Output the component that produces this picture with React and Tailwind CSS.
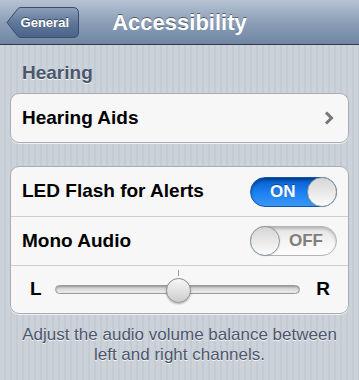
import React from "react";

function Toggle({ on }) {
  if (on) {
    return (
      <div className="relative flex h-[30px] w-[87px] items-center rounded-full border border-[#0b57b0] bg-[linear-gradient(#0659c8,#1a7ff0_50%,#3b97f5)] shadow-[inset_0_2px_3px_rgba(0,0,0,0.35)]">
        <span className="pl-[19px] text-[17px] font-bold text-white [text-shadow:0_-1px_0_rgba(0,0,0,0.35)]">ON</span>
        <div className="absolute right-[-1px] top-[-1px] h-[30px] w-[30px] rounded-full border border-[#8f9aa6] bg-[linear-gradient(#d5d5d5,#fcfcfc)] shadow-[0_0_1px_rgba(0,0,0,0.3)]" />
      </div>
    );
  }
  return (
    <div className="relative flex h-[30px] w-[87px] items-center justify-end rounded-full border border-[#b4b4b4] bg-[linear-gradient(#e4e4e4,#f6f6f6_60%,#fdfdfd)] shadow-[inset_0_2px_3px_rgba(0,0,0,0.2)]">
      <span className="pr-[13px] text-[17px] font-bold text-[#7f7f7f]">OFF</span>
      <div className="absolute left-[-1px] top-[-1px] h-[30px] w-[30px] rounded-full border border-[#8f9aa6] bg-[linear-gradient(#d5d5d5,#fcfcfc)] shadow-[0_0_1px_rgba(0,0,0,0.3)]" />
    </div>
  );
}

export default function App() {
  return (
    <div
      className="flex h-[380px] w-[359px] flex-col overflow-hidden bg-[image:repeating-linear-gradient(90deg,#cbd2d9_0px,#cbd2d9_4px,#c4cbd3_4px,#c4cbd3_6px)]"
      style={{ fontFamily: '"Liberation Sans", Arial, sans-serif' }}
    >
      {/* Nav bar */}
      <div className="relative flex h-[45px] shrink-0 items-center justify-center border-b border-[#2e3a4c] bg-[linear-gradient(#b7c3d3,#8c9fb8_50%,#6f86a4)]">
        <div className="absolute left-[6px] top-[7px] flex h-[31px] w-[73px] items-center justify-end pr-[10px]">
          <svg className="absolute inset-0" width="73" height="31" viewBox="0 0 73 31">
            <defs>
              <linearGradient id="bb" x1="0" y1="0" x2="0" y2="1">
                <stop offset="0" stopColor="#8ea1ba" />
                <stop offset="0.5" stopColor="#5f7799" />
                <stop offset="1" stopColor="#4a6389" />
              </linearGradient>
            </defs>
            <path
              d="M1 15.5 L12 1.5 Q13 0.5 15 0.5 L67 0.5 Q72.5 0.5 72.5 6 L72.5 25 Q72.5 30.5 67 30.5 L15 30.5 Q13 30.5 12 29.5 Z"
              fill="url(#bb)"
              stroke="#3c4d66"
              strokeWidth="1"
            />
          </svg>
          <span className="relative text-[13px] font-bold text-white [text-shadow:0_-1px_0_rgba(0,0,0,0.45)]">General</span>
        </div>
        <span className="text-[22px] font-bold text-white [text-shadow:0_-1px_0_rgba(0,0,0,0.45)]">Accessibility</span>
      </div>

      {/* Hearing header */}
      <div className="pl-[22px] pt-[16px] text-[19px] font-bold leading-[23px] text-[#4c566c] [text-shadow:0_1px_0_rgba(255,255,255,0.8)]">
        Hearing
      </div>

      {/* Group 1 */}
      <div className="mx-[10px] mt-[9px] overflow-hidden rounded-[9px] border border-[#a9adb3] bg-[#f7f7f7] shadow-[0_1px_0_rgba(255,255,255,0.7)]">
        <div className="flex h-[48px] items-center justify-between pl-[11px] pr-[14px]">
          <span className="text-[19px] font-bold text-black">Hearing Aids</span>
          <svg width="10" height="14" viewBox="0 0 10 14">
            <path d="M2 1.5 L7.5 7 L2 12.5" fill="none" stroke="#777777" strokeWidth="3" />
          </svg>
        </div>
      </div>

      {/* Group 2 */}
      <div className="mx-[10px] mt-[23px] overflow-hidden rounded-[9px] border border-[#a9adb3] bg-[#f7f7f7] shadow-[0_1px_0_rgba(255,255,255,0.7)]">
        <div className="flex h-[49px] items-center justify-between pl-[11px] pr-[11px]">
          <span className="text-[19px] font-bold text-black">LED Flash for Alerts</span>
          <Toggle on />
        </div>
        <div className="flex h-[49px] items-center justify-between border-t border-[#cfcfcf] pl-[11px] pr-[11px]">
          <span className="text-[19px] font-bold text-black">Mono Audio</span>
          <Toggle on={false} />
        </div>
        <div className="flex h-[48px] items-center border-t border-[#cfcfcf] pl-[19px] pr-[18px]">
          <span className="w-[9px] text-[19px] font-bold text-black">L</span>
          <div className="relative mx-[16px] flex h-full flex-1 items-center">
            <div className="h-[9px] w-full rounded-full border border-[#9a9a9a] bg-[linear-gradient(#c9c9c9,#eeeeee)] shadow-[inset_0_1px_2px_rgba(0,0,0,0.25)]" />
            <div className="absolute left-[123px] top-[4px] h-[6px] w-px bg-[#9a9a9a]" />
            <div className="absolute left-[111px] top-[12px] h-[25px] w-[25px] rounded-full border border-[#8e8e8e] bg-[linear-gradient(#f7f7f7,#cdcdcd)] shadow-[0_1px_2px_rgba(0,0,0,0.3)]" />
          </div>
          <span className="text-[19px] font-bold text-black">R</span>
        </div>
      </div>

      {/* Footer */}
      <div className="mt-[11px] px-[10px] text-center text-[17px] leading-[20px] text-[#4c566c] [text-shadow:0_1px_0_rgba(255,255,255,0.8)]">
        Adjust the audio volume balance between left and right channels.
      </div>
    </div>
  );
}
